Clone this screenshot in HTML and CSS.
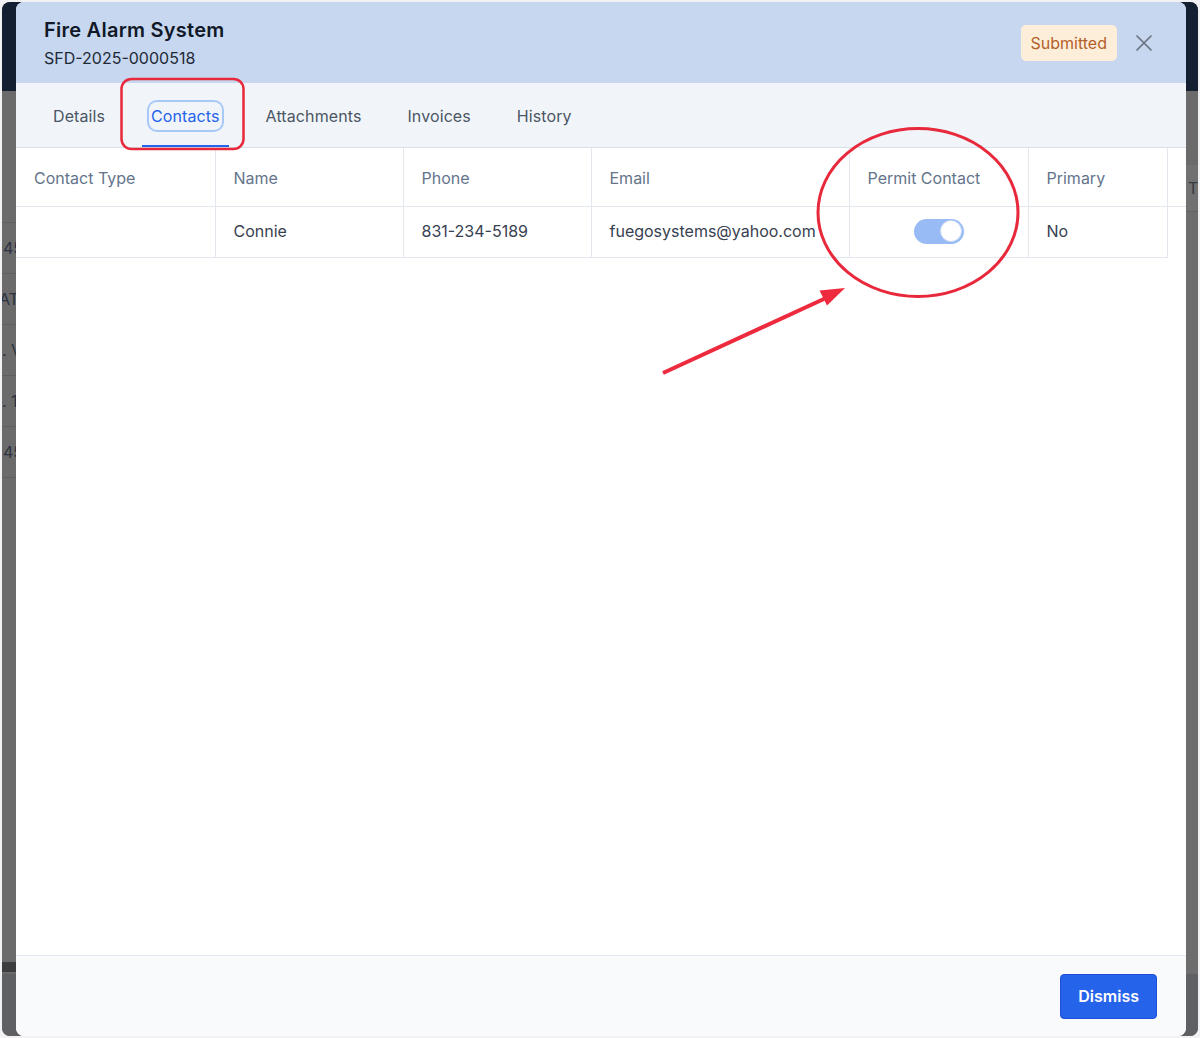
FILE: index.html
```html
<!DOCTYPE html>
<html lang="en">
<head>
<meta charset="utf-8">
<title>Fire Alarm System</title>
<link rel="stylesheet" href="styles.css">
</head>
<body>
<div class="app">
  <div class="app-top"></div>
  <div class="app-body">
    <div class="bg-left">
      <div class="bg-row"><span class="ind-a">45</span></div>
      <div class="bg-row"><span class="ind-b">AT</span></div>
      <div class="bg-row"><span class="ind-c">. V</span></div>
      <div class="bg-row"><span class="ind-c">. 1</span></div>
      <div class="bg-row"><span class="ind-a">45</span></div>
      <div class="bg-row"></div>
      <div class="bg-band"></div>
    </div>
    <div class="bg-right">
      <div class="bg-r-top"></div>
      <div class="bg-r-row"><span>T</span></div>
      <div class="bg-r-rest"></div>
    </div>
  </div>
  <div class="app-foot"></div>

  <div class="overlay">
    <div class="modal">
      <header class="modal-head">
        <div class="titles">
          <h1 class="title">Fire Alarm System</h1>
          <div class="subtitle">SFD-2025-0000518</div>
        </div>
        <div class="head-actions">
          <span class="badge">Submitted</span>
          <button class="close" aria-label="Close">
            <svg width="18" height="18" viewBox="0 0 18 18"><path d="M2 2 L16 16 M16 2 L2 16" stroke="#6b7280" stroke-width="1.7" stroke-linecap="round" fill="none"/></svg>
          </button>
        </div>
      </header>
      <nav class="tabs">
        <div class="tab">Details</div>
        <div class="tab active"><span class="ring">Contacts</span></div>
        <div class="tab">Attachments</div>
        <div class="tab">Invoices</div>
        <div class="tab">History</div>
      </nav>
      <div class="modal-content">
        <table class="grid">
          <colgroup>
            <col class="c1"><col class="c2"><col class="c3"><col class="c4"><col class="c5"><col class="c6"><col class="c7">
          </colgroup>
          <thead>
            <tr>
              <th>Contact Type</th>
              <th>Name</th>
              <th>Phone</th>
              <th>Email</th>
              <th>Permit Contact</th>
              <th>Primary</th>
              <th class="filler"></th>
            </tr>
          </thead>
          <tbody>
            <tr>
              <td></td>
              <td>Connie</td>
              <td>831-234-5189</td>
              <td>fuegosystems@yahoo.com</td>
              <td class="center"><span class="switch"><span class="knob"></span></span></td>
              <td>No</td>
            </tr>
          </tbody>
        </table>
      </div>
      <footer class="modal-foot">
        <button class="btn-primary">Dismiss</button>
      </footer>
    </div>
  </div>
</div>

<svg class="annot" width="1200" height="1038" viewBox="0 0 1200 1038">
  <rect x="121.5" y="79" width="122" height="70" rx="10" ry="10" fill="none" stroke="#e8283b" stroke-width="2.5"/>
  <ellipse cx="918" cy="212.5" rx="100" ry="84" fill="none" stroke="#e8283b" stroke-width="3"/>
  <line x1="663" y1="373" x2="826" y2="298" stroke="#ee2b3e" stroke-width="4"/>
  <polygon points="845,288 819.5,290.5 827,305.5" fill="#ee2b3e"/>
</svg>
</body>
</html>
```

FILE: styles.css
```css
* { box-sizing: border-box; }

html, body {
  margin: 0;
  padding: 0;
}

body {
  position: relative;
  width: 1200px;
  height: 1038px;
  background: #f2f2f4;
  font-family: Inter, "Noto Sans", "Liberation Sans", sans-serif;
  overflow: hidden;
}

/* underlying dimmed page */
.app {
  position: relative;
  margin: 2px;
  height: 1034px;
  border-radius: 8px;
  overflow: hidden;
  background: #6b6b6b;
  display: flex;
  flex-direction: column;
}

.app-top {
  height: 89px;
  background: #151f32;
  flex: none;
}

.app-body {
  flex: 1;
  display: flex;
  justify-content: space-between;
}

.bg-left {
  width: 14px;
  padding-top: 131px;
  display: flex;
  flex-direction: column;
  overflow: hidden;
}

.bg-row {
  height: 51px;
  border-top: 1px solid #5f5f60;
  display: flex;
  align-items: center;
  color: #2c3240;
  font-size: 16px;
  white-space: nowrap;
}

.ind-a { margin-left: 1px; }
.ind-b { margin-left: -3px; }
.ind-c { margin-left: 0; }

.bg-band {
  margin-top: auto;
  height: 10px;
  background: #3d3d3f;
  margin-bottom: 2px;
}

.bg-right {
  width: 12px;
  display: flex;
  flex-direction: column;
}

.bg-r-top {
  height: 74px;
}

.bg-r-row {
  height: 47px;
  background: #717171;
  border-bottom: 1px solid #636363;
  display: flex;
  align-items: center;
  padding-left: 2px;
  color: #353a44;
  font-size: 16px;
}

.bg-r-rest {
  flex: 1;
  background: #6d6d6d;
}

.app-foot {
  height: 62px;
  background: #5f6064;
  flex: none;
}

/* modal */
.overlay {
  position: absolute;
  inset: 0;
  display: flex;
  padding-left: 14px;
}

.modal {
  width: 1170px;
  height: 100%;
  background: #ffffff;
  border-radius: 8px;
  overflow: hidden;
  display: flex;
  flex-direction: column;
}

.modal-head {
  background: #c6d7ef;
  padding: 14px 33px 13px 28px;
  display: flex;
  justify-content: space-between;
  align-items: center;
  flex: none;
}

.title {
  margin: 0;
  font-size: 20px;
  line-height: 28px;
  font-weight: 600;
  letter-spacing: 0.25px;
  color: #111827;
}

.subtitle {
  margin-top: 2px;
  font-size: 16px;
  line-height: 24px;
  color: #1f2937;
}

.head-actions {
  display: flex;
  align-items: center;
  gap: 18px;
}

.badge {
  display: inline-block;
  background: #fdeed9;
  color: #b35f2a;
  font-size: 16px;
  line-height: 36px;
  padding: 0 10px;
  border-radius: 5px;
  margin-top: -1px;
}

.close {
  border: 0;
  background: transparent;
  padding: 0;
  width: 18px;
  height: 18px;
  display: flex;
}

.tabs {
  flex: none;
  height: 65px;
  background: #f1f5fa;
  border-bottom: 1px solid #d9e1ec;
  display: flex;
  gap: 28px;
  padding-left: 28px;
}

.tab {
  height: 64px;
  padding: 2px 9px 0;
  display: flex;
  align-items: center;
  font-size: 16px;
  line-height: 24px;
  letter-spacing: 0.1px;
  color: #4b5563;
  border-top: 2px solid transparent;
  border-bottom: 2px solid transparent;
}

.tab.active {
  color: #2563eb;
  border-bottom-color: #2563eb;
}

.ring {
  padding: 2px 2px;
  margin: 0 -2px;
  border-radius: 8px;
  box-shadow: 0 0 0 2px #a8c8f7;
}

.modal-content {
  flex: 1;
  overflow: hidden;
  background: #ffffff;
}

.grid {
  border-collapse: collapse;
  table-layout: fixed;
  width: 1251px;
  font-size: 16px;
}

.c1 { width: 199px; }
.c2 { width: 188px; }
.c3 { width: 188px; }
.c4 { width: 258px; }
.c5 { width: 179px; }
.c6 { width: 139px; }
.c7 { width: 100px; }

.grid th {
  height: 58px;
  padding: 2px 18px 0;
  text-align: left;
  font-weight: 400;
  color: #64748b;
  border-right: 1px solid #e3e8ef;
  border-bottom: 1px solid #e3e8ef;
  white-space: nowrap;
}

.grid th.filler {
  border-right: 0;
}

.grid td {
  height: 51px;
  padding: 0 18px 2px;
  color: #374151;
  border-right: 1px solid #e3e8ef;
  border-bottom: 1px solid #e3e8ef;
  white-space: nowrap;
}

.grid td.center {
  text-align: center;
  padding: 0 0 1px;
}

.switch {
  display: inline-flex;
  align-items: center;
  justify-content: flex-end;
  vertical-align: middle;
  width: 50px;
  height: 25px;
  border-radius: 13px;
  background: #98bbf6;
  padding: 2px;
}

.knob {
  width: 22px;
  height: 22px;
  border-radius: 50%;
  background: #ffffff;
  border: 1px solid #cfdcf3;
}

.modal-foot {
  flex: none;
  border-top: 1px solid #e2e8f0;
  background: #f8fafc;
  padding: 18px 29px 17px;
  display: flex;
  justify-content: flex-end;
}

.btn-primary {
  font-family: inherit;
  font-size: 16px;
  font-weight: 600;
  line-height: 23px;
  color: #ffffff;
  background: #2563eb;
  border: 1px solid #1d4ed8;
  border-radius: 4px;
  padding: 10px 17px;
}

.annot {
  position: absolute;
  top: 0;
  left: 0;
  pointer-events: none;
}
```
